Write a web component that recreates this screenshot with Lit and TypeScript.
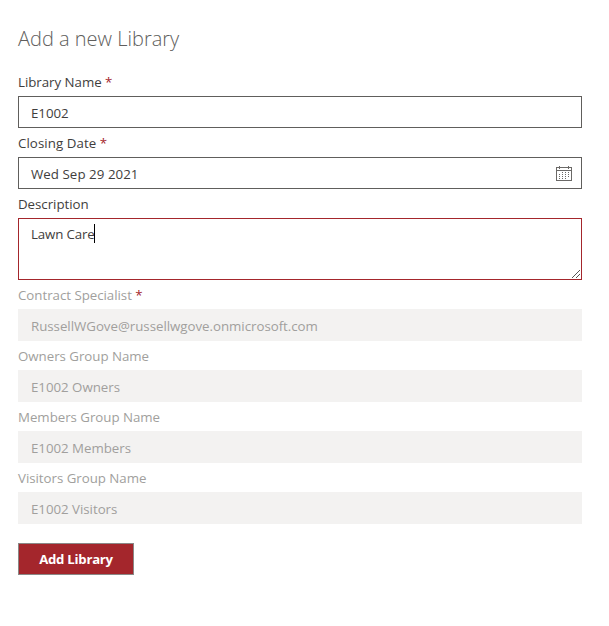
import { LitElement, html, css, svg, nothing } from "lit";
import { customElement } from "lit/decorators.js";
import { classMap } from "lit/directives/class-map.js";

interface Field {
  label: string;
  value: string;
  required?: boolean;
  disabled?: boolean;
  kind?: "date" | "area";
}

const fields: Field[] = [
  { label: "Library Name", value: "E1002", required: true },
  { label: "Closing Date", value: "Wed Sep 29 2021", required: true, kind: "date" },
  { label: "Description", value: "Lawn Care", kind: "area" },
  { label: "Contract Specialist", value: "RussellWGove@russellwgove.onmicrosoft.com", required: true, disabled: true },
  { label: "Owners Group Name", value: "E1002 Owners", disabled: true },
  { label: "Members Group Name", value: "E1002 Members", disabled: true },
  { label: "Visitors Group Name", value: "E1002 Visitors", disabled: true },
];

// Day marks of the calendar icon
const days = [
  [6, 8], [9, 8], [12, 8],
  [3, 10], [6, 10], [9, 10], [12, 10],
  [3, 12], [6, 12], [9, 12], [12, 12],
  [3, 14], [6, 14], [9, 14],
];

@customElement("app-root")
export class AppRoot extends LitElement {
  static styles = css`
    :host {
      display: block;
      box-sizing: border-box;
      height: 626px;
      padding: 24px 27px 0 18px;
      background: #fff;
      color: #3f3e3d;
      font: 13.3px/20px "Open Sans", "Noto Sans", sans-serif;
      letter-spacing: -0.03px;
    }
    h1 {
      margin: 0;
      height: 43px;
      font-size: 20px;
      line-height: 29px;
      font-weight: 300;
      letter-spacing: 0;
      color: #605e5c;
    }
    .label {
      display: block;
      box-sizing: border-box;
      height: 29px;
      padding-top: 5px;
      white-space: pre;
    }
    .date .label { letter-spacing: 0.07px; }
    .date .box { letter-spacing: 0.05px; }
    .star { color: #a4262c; }
    .disabled { color: #a19f9d; }
    .box {
      display: flex;
      justify-content: space-between;
      box-sizing: border-box;
      height: 32px;
      padding: 6px 9px 0 12px;
      border: 1px solid #605e5c;
    }
    .disabled .box { background: #f3f2f1; border-color: #f3f2f1; }
    .area .box {
      height: 62px;
      padding: 5px 0 0 12px;
      border-color: #a4262c;
      letter-spacing: -0.16px;
    }
    .caret {
      display: inline-block;
      width: 1px;
      height: 19px;
      background: #000;
      vertical-align: top;
    }
    .grip { align-self: flex-end; }
    svg { display: block; }
    button {
      display: block;
      box-sizing: border-box;
      width: 116px;
      height: 32px;
      margin-top: 19px;
      padding: 0;
      border: 1px solid #8a8886;
      background: #a4262c;
      color: #fff;
      font: 700 13.2px/20px "Open Sans", "Noto Sans", sans-serif;
      letter-spacing: -0.25px;
    }
  `;

  private calendar() {
    return html`<svg width="16" height="20" viewBox="0 0 16 20" shape-rendering="crispEdges" fill="#6b6967">
      <path d="M0 3h16v14H0zM1 4v2h14V4zM1 7v9h14V7z" fill-rule="evenodd" />
      <path d="M3 2h1v3H3zM12 2h1v3h-1z" />
      ${days.map(([x, y]) => svg`<rect x=${x} y=${y} width="1" height="1" />`)}
    </svg>`;
  }

  private grip() {
    return html`<svg class="grip" width="10" height="10" viewBox="0 0 10 10" shape-rendering="crispEdges" fill="#555">
      ${[0, 1, 2, 3, 4, 5, 6, 7].map((i) => svg`<rect x=${1 + i} y=${8 - i} width="1" height="1" />`)}
      ${[0, 1, 2, 3].map((i) => svg`<rect x=${5 + i} y=${8 - i} width="1" height="1" />`)}
    </svg>`;
  }

  render() {
    return html`
      <h1>Add a new Library</h1>
      ${fields.map((f) => html`
        <div class=${classMap({ disabled: !!f.disabled, date: f.kind === "date", area: f.kind === "area" })}>
          <span class="label">${f.label}${f.required ? html`<span class="star"> *</span>` : nothing}</span>
          <div class="box">
            <span>${f.value}${f.kind === "area" ? html`<i class="caret"></i>` : nothing}</span>
            ${f.kind === "date" ? this.calendar() : f.kind === "area" ? this.grip() : nothing}
          </div>
        </div>`)}
      <button>Add Library</button>
    `;
  }
}
